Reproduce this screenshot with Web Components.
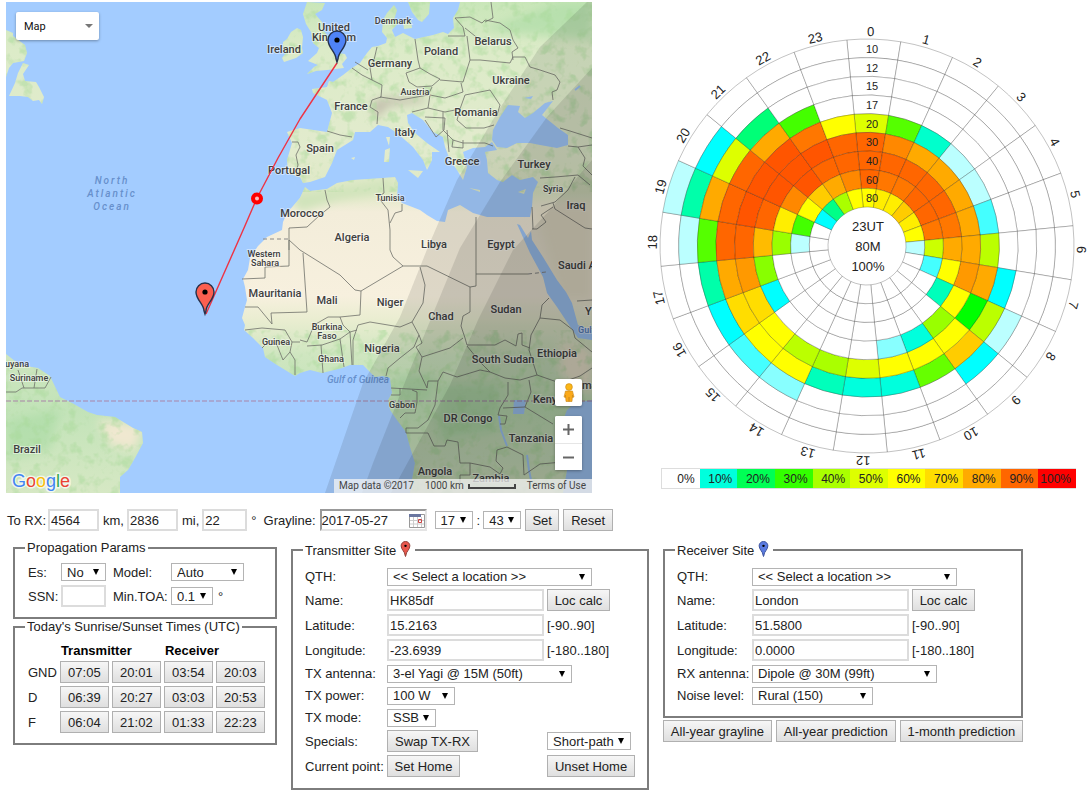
<!DOCTYPE html>
<html lang="en">
<head>
<meta charset="utf-8">
<title>HF Propagation Prediction</title>
<style>
  html { background: #fff; }
  body {
    margin: 0;
    padding: 2px 0 0 6px;
    font: 13px/15px "Liberation Sans", Arial, sans-serif;
    color: #222;
  }
</style>
</head>
<body>
<propagation-app></propagation-app>

<script>
/* Form styles shared by every panel's shadow root. */
const FORM_CSS = `
  * { box-sizing: border-box; }
  input, select, button { font: inherit; color: #222; margin: 0; border-radius: 0; }
  input { height: 22px; width: 100%; padding: 0 1px; border: 2px solid #dcdcdc; background: #fff; outline: 0; }
  select {
    appearance: none; height: 18px; padding: 0 13px 0 5px; border: 1px solid #b4b4b4;
    background: #fff url("data:image/svg+xml,%3Csvg xmlns='http://www.w3.org/2000/svg' width='6' height='6'%3E%3Cpath d='M0 0H6L3 6Z' fill='%23000'/%3E%3C/svg%3E") no-repeat right 6px center;
  }
  button {
    height: 22px; padding: 0; border: 1px solid #b0b0b0; white-space: nowrap;
    background: linear-gradient(#f6f6f6, #dfdfdf);
  }
  label, span { white-space: nowrap; }
`;

const PIN = 'M0 31L-1 28C-1 21-9 17-9 9A9 9 0 0 1 9 9C9 17 1 21 1 28Z';

function define(name, render) {
  customElements.define(name, class extends HTMLElement {
    connectedCallback() {
      if (this.shadowRoot) return;
      this.attachShadow({ mode: 'open' }).innerHTML = render(this);
    }
  });
}

/* ---------- framed box with a caption on its border ---------- */
define('panel-box', () => `
  <style>
    :host { display: block; }
    fieldset { box-sizing: border-box; min-width: 0; margin: 0; border: 2px solid #7d7d7d; padding: var(--pad, 8px 10px 10px); }
    legend { padding: 0 2px; white-space: nowrap; }
  </style>
  <fieldset>
    <legend><slot name="legend"></slot></legend>
    <slot></slot>
  </fieldset>`);

/* ---------- map ---------- */
const LAND = [
  // Europe, Asia and Africa in one coastline
  'M312 89L327 87 329 81 333 82 343 75 352 68 360 63 367 53 372 47 378 46 386 43 387 38 382 32 383 20 387 13 394 5 397 10 394 20 400 21 392 30 395 37 403 33 415 39 433 35 443 32 448 34 454 28 453 18 458 10 460 2 592 2 592 493 410 493 412 480 415 463 410 447 406 432 397 420 390 410 388 400 392 393 390 378 383 376 375 377 368 370 363 365 350 365 342 368 322 373 310 370 300 373 295 376 277 365 265 357 263 348 253 338 244 330 245 325 242 318 245 307 247 300 245 287 243 279 248 270 250 258 258 246 267 237 282 230 283 222 287 213 300 198 305 187 310 191 327 189 337 183 353 180 383 178 395 177 398 183 397 197 402 203 420 210 427 215 437 221 445 222 448 210 460 205 473 213 487 217 510 217 530 217 532 207 533 193 538 182 533 177 520 180 512 175 503 182 497 180 488 173 487 160 485 152 497 150 492 142 485 147 473 148 463 152 467 167 463 180 457 170 450 160 445 147 443 137 433 132 423 120 412 113 407 115 408 123 415 133 427 143 440 152 432 152 432 160 427 170 423 160 413 147 397 133 388 127 378 125 370 132 355 132 353 140 337 150 332 163 325 177 310 182 303 183 300 177 288 173 287 160 292 143 287 132 300 128 327 132 332 113 327 100 313 93Z',
  // Great Britain
  'M307 2L325 3 322 10 315 14 322 22 323 30 330 39 334 48 336 53 345 54 347 58 342 64 344 68 327 70 316 71 307 74 314 67 318 65 308 61 317 53 319 48 313 43 311 32 306 24 303 14Z',
  // Ireland
  'M291 32L297 28 301 30 303 37 302 48 303 53 296 58 284 62 282 58 286 53 283 49 283 42 287 39Z',
  // Sweden, Danish isles
  'M408 2L430 2 429 14 422 22 418 20 412 12Z', 'M403 22L411 20 412 28 404 29Z',
  // Mediterranean islands
  'M408 170L423 171 418 178Z', 'M385 150L390 148 389 162 384 162Z', 'M386 137L390 137 389 146Z', 'M518 192L526 189 524 194Z', 'M469 188L480 190 480 192Z', 'M351 158L355 157 354 160Z',
  // Labrador and Newfoundland
  'M6 30L13 33 13 36 25 45 27 53 24 61 13 63 9 68 6 77Z',
  'M23 63L29 65 23 74 25 81 36 82 39 87 44 97 42 104 39 100 33 101 28 97 20 96 9 96 15 83 18 73Z',
  // South America
  'M6 354L20 365 38 368 50 376 60 397 72 403 88 412 97 415 115 417 133 428 142 432 143 443 135 458 128 470 120 477 120 493 6 493Z'
].join('');

const BORDERS = [
  'M325 190L327 200 330 207 320 215 307 227 289 228 289 250', 'M242 279L265 278 265 267 289 266 289 240 300 250 340 275 355 290 361 291 403 266 393 257 390 250 390 230 388 210 378 197 384 193 383 178', 'M390 223L395 213 402 211 402 204',
  'M303 253L307 312 271 313 272 324 258 307 245 307', 'M403 266L420 266 427 266 470 287 476 286 476 217', 'M476 274L528 274', 'M470 287L470 312 463 316 461 326 465 338 467 345 495 345 505 340 516 346 518 334 522 333 522 345 530 348',
  'M420 267L425 285 423 303 412 322 400 327 370 322 358 325 353 340 353 365', 'M361 291L360 315 340 317 328 317 314 325 310 335 307 342 300 340', 'M340 317L343 325 350 332 357 330', 'M307 346L322 345 340 339 350 332 352 365', 'M321 345L323 373M340 339L344 367',
  'M412 322L419 335 414 347 400 358 388 368 386 376', 'M419 335L422 343 416 347 422 357 450 348 463 338', 'M422 357L419 371 427 388 428 381 438 381 443 372 457 377 480 370 490 372 505 378 520 380 537 375 529 350 531 335 540 318 542 305 549 298',
  'M467 346L480 362 490 372', 'M391 388L427 390M391 395L400 395 400 388M412 390L417 392 417 402 415 413 405 413 400 418', 'M438 381L435 405 428 420 418 428 406 428 406 433 428 433 434 446 445 446 447 440 458 442 460 463 470 463 470 475 460 475 460 485', 'M470 463L490 467 500 474 503 468 496 461 497 450 507 447 523 455 524 475 540 464 563 462',
  'M540 318L560 320 573 330 575 338 592 352', 'M537 375L560 383 580 376 592 368', 'M508 382L508 395 500 408 498 415 507 416 505 424 500 424', 'M529 380L531 392 525 407 553 424', 'M503 408L525 407',
  'M245 330L262 328 285 330 292 342 290 352 295 360 295 375M262 348L270 340 277 345 283 360M283 360L290 352M292 342L300 342',
  'M292 142L298 142 300 147 296 155 298 165 296 172M327 131L340 135 352 137', 'M352 68L362 75 372 80 382 85 381 97 372 100 370 107 378 112 377 124M377 47L374 60 370 68 372 80M355 62L368 70',
  'M415 39L418 60 420 68 406 73 409 82 417 87 432 86 440 79 430 74 420 68M380 97L400 100 428 95 432 87M467 36L470 60 463 82 440 80M430 95L445 98 463 92 461 83M412 112L428 108 430 95M428 108L445 112 460 109 465 95 490 90 500 105 497 115',
  'M460 109L457 120 466 128 484 128 494 125M470 60L480 60 510 63 513 57 525 57 530 67 540 70 555 75 560 82 557 90 552 92 553 100M448 36L465 36 463 27 455 18 470 17 482 23 485 20 500 23 510 30 513 40 518 48 512 52 513 60M491 2L493 18 485 22M465 28L480 40',
  'M425 117L445 118 444 130 436 137 425 120M443 112L443 130 453 140 463 143 485 143 493 146M447 130L449 152M453 140L452 147 463 148 463 140',
  'M540 178L555 177 578 175 590 185M575 177L568 190 555 202 541 206M553 203L555 209 585 228 592 229M532 229L537 229 546 222 541 215 553 207M532 207L533 229M560 128L570 131 592 138M568 146L578 147 585 158 583 166 592 175M578 147L592 145M577 301L592 300',
  'M6 392L16 392 22 388 45 388 51 377M18 370L24 388M37 369L34 388'
].join('');

const PLACES = [ // text, centre x, centre y, size class
  ['United',334,27],['Kingdom',334,37],['Ireland',284,49],['Denmark',393,21,'s'],['Belarus',493,41],['Poland',441,51],['Germany',390,63],['Ukraine',511,80],['France',351,106],['Austria',415,92,'s'],['Romania',476,112],['Italy',405,132],['Spain',320,148],['Portugal',289,170],['Greece',462,161],['Turkey',534,164],['Syria',553,189,'s'],['Iraq',576,205],['Tunisia',390,198,'s'],['Morocco',302,213],['Algeria',352,237],['Libya',434,244],['Egypt',501,244],['Western',264,254,'s'],['Sahara',265,263,'s'],['Mauritania',275,293],['Mali',327,300],['Niger',390,302],['Chad',441,316],['Sudan',506,309],['Guinea',276,342,'s'],['Burkina',327,327,'s'],['Faso',327,336,'s'],['Ghana',331,359,'s'],['Nigeria',382,348],['South Sudan',503,359],['Ethiopia',557,353],['Gabon',402,405,'s'],['DR Congo',468,418],['Tanzania',531,438],['Angola',435,471],['Zambia',491,478],['Suriname',29,378,'s'],['Brazil',27,449]
];

define('path-map', () => `
  <style>
    :host { display: block; position: relative; font-family: Roboto, sans-serif; }
    svg { display: block; width: 100%; height: auto; }
    text { font-size: 11px; font-weight: 500; fill: #404040; text-anchor: middle; paint-order: stroke; stroke: #fff; stroke-opacity: .45; stroke-width: 2px; }
    .s { font-size: 9px; }
    .sea { fill: #6790cc; stroke: none; font-style: italic; font-size: 10px; }
    .wide { letter-spacing: 2px; }
    .start { text-anchor: start; }
    .logo { font: 18px "Liberation Sans", sans-serif; stroke-width: 3px; stroke-opacity: .7; text-anchor: start; }
    button { font: 11px Roboto, sans-serif; color: #111; background: #fff; border: 0; border-radius: 2px; box-shadow: 0 1px 3px #0005; padding: 0; }
    button svg { margin: auto; width: auto; }
    .type { position: absolute; left: 10px; top: 10px; width: 83px; height: 28px; display: flex; align-items: center; justify-content: space-between; padding: 0 6px 0 8px; }
    .type svg { margin: 0; }
    .tools { position: absolute; right: 10px; bottom: 23px; width: 27px; display: grid; gap: 10px; }
    .tools button { height: 27px; width: 27px; }
    .zoom { display: grid; background: #fff; box-shadow: 0 1px 3px #0005; border-radius: 2px; }
    .zoom button { box-shadow: none; }
    .zoom button + button { border-top: 1px solid #e6e6e6; border-radius: 0; }
    .credits { position: absolute; right: 0; bottom: 0; height: 14px; display: flex; align-items: center; gap: 11px; padding: 0 6px 0 5px; background: #f5f5f5bb; color: #444; font-size: 10px; line-height: 14px; white-space: nowrap; }
    .credits a { color: inherit; text-decoration: none; }
    .scale { display: flex; align-items: center; gap: 4px; }
    .scale i { width: 48px; height: 5px; box-sizing: border-box; border: solid #444; border-width: 0 2px 2px; }
  </style>
  <svg viewBox="6 2 586 491" role="img" aria-label="Great circle path from transmitter to receiver">
    <defs>
      <linearGradient id="ground" gradientUnits="userSpaceOnUse" x1="0" y1="0" x2="0" y2="493">
        <stop offset="0" stop-color="#c8e6b8"/><stop offset=".1" stop-color="#dcebc8"/><stop offset=".3" stop-color="#e2ebcd"/>
        <stop offset=".39" stop-color="#dfe9c6"/><stop offset=".43" stop-color="#f3edda"/><stop offset=".6" stop-color="#f7f0de"/>
        <stop offset=".65" stop-color="#e9edd0"/><stop offset=".72" stop-color="#cfe6c0"/><stop offset=".83" stop-color="#c2e3b8"/><stop offset="1" stop-color="#d6e8c4"/>
      </linearGradient>
      <filter id="soft" x="-30%" y="-30%" width="160%" height="160%"><feGaussianBlur stdDeviation="5"/></filter>
      <filter id="grain" x="0" y="0" width="100%" height="100%" color-interpolation-filters="sRGB"><feTurbulence type="fractalNoise" baseFrequency=".09" numOctaves="3" seed="4"/><feColorMatrix values="0 0 0 0 .66  0 0 0 0 .85  0 0 0 0 .6  4 0 0 0 -2"/></filter>
      <clipPath id="coast"><path d="${LAND}"/></clipPath>
      <clipPath id="frame"><path d="M6 2H592V493H6Z"/></clipPath>
    </defs>
    <g clip-path="url(#frame)">
      <path fill="#a3ccff" d="M6 2H592V493H6Z"/>
      <path fill="url(#ground)" d="${LAND}"/>
      <g clip-path="url(#coast)">
        <g filter="url(#soft)">
          <path fill="#f0e8d0" d="M533 205H592V300H560ZM98 420L143 425 135 450 110 445ZM560 340L592 350V395L560 375Z"/>
          <path fill="#a8daa4" opacity=".6" d="M440 385L500 385 495 430 440 440ZM6 420L60 410 50 450 6 460ZM560 2H592V40L480 30ZM396 375L435 375 430 400 395 405Z"/>
          <path fill="#b6ada0" opacity=".7" d="M371 102L385 98 425 97 425 102 388 106 376 120Z"/>
          <path fill="#cfe3ba" d="M290 195L330 190 390 180 395 190 335 200 300 212Z"/>
        </g>
        <rect filter="url(#grain)" opacity=".5" x="6" y="2" width="586" height="190"/>
        <rect filter="url(#grain)" opacity=".5" x="6" y="330" width="586" height="163"/>
      </g>
      <g fill="#a3ccff">
        <path d="M493 130L500 117 508 105 520 106 518 112 525 118 533 113 545 103 553 101 542 115 558 128 568 135 568 145 557 148 540 145 530 143 517 143 507 148 497 147 492 140Z"/>
        <path d="M517 224L520 225 528 238 531 231 532 240 543 257 557 280 566 292 572 303 578 325 592 330V340L578 338 567 322 557 307 547 293 543 277 530 253Z"/>
        <path d="M592 400L575 403 567 410 562 423 563 450 567 470 563 493H592Z"/>
        <path d="M514 400H526L524 414H513ZM524 98L533 96 531 99Z"/>
        <path fill="none" stroke="#a3ccff" stroke-width="2" d="M499 416L501 430 507 446M527 455L529 470 531 480M575 90L580 86"/>
      </g>
      <path d="${BORDERS}" fill="none" stroke="#6f706a" stroke-opacity=".8" stroke-linejoin="round"/>
      <path d="M263 239H288M528 274L546 272" fill="none" stroke="#888" stroke-dasharray="4 3"/>
      <path d="M6 401H592" stroke="#a984a8" stroke-dasharray="5 2"/>
      <g>
        ${PLACES.map(([t, x, y, c]) => `<text class="${c || ''}" x="${x}" y="${y + (c ? 3 : 4)}">${t}</text>`).join('')}
        <text class="start" x="558" y="269">Saudi A</text><text class="start" x="585" y="315">Y</text>
        <text class="start" x="533" y="403">Keny</text><text class="start" x="582" y="389">ma</text>
        <text class="start s" x="5" y="367">uyana</text><text class="start s" x="578" y="333" style="fill:#5580c0">Gulf</text>
        <text class="sea" x="358" y="383">Gulf of Guinea</text>
        <text class="sea wide" x="112" y="184">North</text><text class="sea wide" x="112" y="197">Atlantic</text><text class="sea wide" x="112" y="210">Ocean</text>
      </g>
      <g fill="#141414" fill-opacity=".11">
        <path d="M587 2L540 47 500 108 457 180 428 247 400 317 363 383 325 493H592V2Z"/>
        <path d="M592 68L547 117 500 182 460 248 407 377 373 463 362 493H592Z"/>
        <path d="M592 160L548 212 513 250 478 320 450 385 420 440 391 493H592Z"/>
      </g>
      <path d="M337 63L300 119 278 158 257 198 244 228 206 314" fill="none" stroke="#ee3344" stroke-width="1.4" stroke-linejoin="round"/>
      <circle cx="257" cy="198.5" r="4" fill="#fbb" stroke="#f00" stroke-width="4"/>
      <g stroke="#25304a" stroke-width="1.4">
        <path transform="translate(337 31)" fill="#4f83f7" d="${PIN}"/>
        <path transform="translate(205 283)" fill="#fb5f50" d="${PIN}"/>
      </g>
      <circle cx="337" cy="40" r="2.600"/><circle cx="205" cy="292" r="2.600"/>
      <text class="logo" x="12" y="487"><tspan fill="#4285f4">G</tspan><tspan fill="#ea4335">o</tspan><tspan fill="#fbbc05">o</tspan><tspan fill="#4285f4">g</tspan><tspan fill="#34a853">l</tspan><tspan fill="#ea4335">e</tspan></text>
    </g>
  </svg>
  <button class="type" type="button" aria-haspopup="true">Map<svg width="8" height="4" viewBox="0 0 8 4"><path d="M0 0H8L4 4Z" fill="#777"/></svg></button>
  <div class="tools">
    <button type="button" aria-label="Street View"><svg width="12" height="20" viewBox="0 0 12 20"><circle cx="6" cy="4" r="3.400" fill="#fbb617" stroke="#c8861a" stroke-width=".6"/><path d="M2.500 8H9.500L11 14 9.500 14.500V12L9 18.500H3L2.500 12V14.500L1 14Z" fill="#fba919" stroke="#c8861a" stroke-width=".6"/><path d="M6 14V18.500" stroke="#c8861a"/></svg></button>
    <div class="zoom">
      <button type="button" aria-label="Zoom in"><svg width="11" height="11" viewBox="0 0 11 11"><path d="M5.500 0V11M0 5.500H11" stroke="#666" stroke-width="2"/></svg></button>
      <button type="button" aria-label="Zoom out"><svg width="11" height="11" viewBox="0 0 11 11"><path d="M0 5.500H11" stroke="#666" stroke-width="2"/></svg></button>
    </div>
  </div>
  <div class="credits"><span>Map data ©2017</span><span class="scale">1000 km<i></i></span><a href="#terms">Terms of Use</a></div>`);

/* ---------- 24-hour band wheel ---------- */
/* One row per hour; nine bands from 10 m (outer) to 80 m (inner), "-" for no opening. */
const HOURS = [
  '- - - - df0 f60 f60 f60 ff0', '- - - - 5f0 f80 f60 f70 fe0', '- - - - 0fc fa0 f60 f70 fe0', '- - - - bff fa0 f60 f60 fc0',
  '- - - - bff fa0 f60 f60 fe0', '- - - - 4ff fa0 f70 f70 ff0', '- - - - bf0 fa0 fa0 cf0 bff', '- - - 0ff fa0 f90 ff0 4ff -',
  '- - bff bf0 0f0 ff0 0fb - -', '- - 0ff fc0 ff0 9f0 - - -', '- - - 6f0 ff0 0fd - - -', '- - - 0fd ff0 8ff - - -',
  '- - - 0fd df0 - - - -', '- - - 0fb af0 - - - -', '- - 8ff ff0 bf0 - - - -', '- - 4ff ff0 ff0 - - - -',
  '- - 0ff fd0 fd0 0ff - - -', '- - 0fa fa0 f90 8f0 - - -', '- bff 5f0 f60 f60 fb0 9f0 bff -', 'bff 0fa fa0 f60 f50 f60 fe0 4f0 -',
  '- 0ff df0 f60 f50 f50 f80 ff0 0ff', '- - 0f7 fa0 f50 f50 f50 fc0 0f8', '- - - 4f0 f70 f50 f60 fa0 af0', '- - - - ff0 f60 f60 f80 ff0'
];
const BANDS = [10, 12, 15, 17, 20, 30, 40, 60, 80];
const SCALE = ['fff', '0fd', '0f5', '3f0', 'af0', 'df0', 'ff0', 'fd0', 'fa0', 'f60', 'f00'];

function wheel() {
  const CX = 867, CY = 246, OUT = 207, IN = 39, STEP = (OUT - IN) / 9;
  const at = (r, deg) => {
    const a = deg * Math.PI / 180;
    return (CX + r * Math.sin(a)).toFixed(1) + ' ' + (CY - r * Math.cos(a)).toFixed(1);
  };
  let cells = '', text = '';
  HOURS.forEach((row, h) => {
    const a = h * 15 - 5.6, b = a + 15;
    row.split(' ').forEach((c, i) => {
      const R = OUT - i * STEP, r = R - STEP;
      cells += `<path fill="${c === '-' ? '#fff' : '#' + c}" d="M${at(R, a)}A${R} ${R} 0 0 1 ${at(R, b)}L${at(r, b)}A${r} ${r} 0 0 0 ${at(r, a)}Z"/>`;
    });
    text += `<text transform="translate(${at(OUT + 3, h * 15 + 1)}) rotate(${h * 15 + 1})">${h}</text>`;
  });
  BANDS.forEach((m, i) => {
    text += `<text class="band" x="872" y="${Math.round(53 + i * STEP)}">${m}</text>`;
  });
  return `<g stroke="#000" stroke-opacity=".3" stroke-width=".8">${cells}</g>${text}
    <text x="868" y="231">23UT</text><text x="868" y="251">80M</text><text x="868" y="271">100%</text>`;
}

define('band-wheel', () => `
  <style>
    :host { display: block; }
    svg { display: block; width: 100%; height: auto; }
    text { font-size: 13px; text-anchor: middle; fill: #222; }
    .band { font-size: 11px; }
    ol { display: flex; list-style: none; margin: 3px 11px 0 21px; padding: 0; height: 21px; box-sizing: border-box; border: 1px solid #ddd; border-width: 1px 0 1px 1px; font-size: 12px; line-height: 20px; }
    li { flex: 1 1 0; text-align: right; padding-right: 5px; }
  </style>
  <svg viewBox="640 20 447 445" role="img" aria-label="Circuit reliability by hour and band">${wheel()}</svg>
  <ol>${SCALE.map((c, i) => `<li style="background:#${c}">${i * 10}%</li>`).join('')}</ol>`);

/* ---------- path summary and grayline time ---------- */
define('path-bar', () => `
  <style>${FORM_CSS}
    :host { display: block; }
    form { display: flex; align-items: center; gap: 2px; margin: 0; }
    .n { width: 51px; } .deg { width: 45px; }
    .unit { margin: 0 1px 0 2px; }
    .gray { margin-left: 4px; }
    .date { position: relative; width: 107px; margin: 0 6px 0 2px; }
    .date input { border-style: solid; border-color: #999 #e4e4e4 #e4e4e4 #999; padding: 0; display: block; }
    .date svg { position: absolute; right: 2px; top: 5px; }
    .hm { width: 38px; }
    .colon { margin: 0 1px 0 2px; }
    .set { width: 34px; margin: 0 2px; } .reset { width: 50px; }
  </style>
  <form>
    <label for="km">To RX:</label><input class="n" id="km" value="4564"><label class="unit" for="km">km,</label>
    <input class="n" id="mi" value="2836" aria-label="Miles"><label class="unit" for="mi">mi,</label>
    <input class="deg" id="deg" value="22" aria-label="Bearing"><label class="unit" for="deg">°</label>
    <label class="gray" for="date">Grayline:</label>
    <div class="date"><input id="date" value="2017-05-27">
      <svg width="16" height="14" viewBox="0 0 16 14"><path fill="#fff" stroke="#999" d="M.5.500H15.500V13.500H.5Z"/><path fill="#6a76a0" d="M0 0H12V3H0Z"/><path stroke="#ccc" d="M4.500 3V13M8.500 3V13M12.500 3V13M1 6.500H15M1 10H15"/><path fill="none" stroke="#c44" d="M9.500 5.500H12.500V8.500H9.500Z"/></svg></div>
    <select class="hm" aria-label="Hour"><option>17</option></select><span class="colon">:</span>
    <select class="hm" aria-label="Minute"><option>43</option></select>
    <button class="set" type="button">Set</button><button class="reset" type="button">Reset</button>
  </form>`);

/* ---------- propagation parameters ---------- */
define('propagation-params', () => `
  <style>${FORM_CSS}
    :host { display: block; }
    form { display: grid; grid-template-columns: 29px 48px 54px auto; gap: 4px; align-items: center; justify-content: start; margin: 0; padding-left: 3px; }
    #es { width: 45px; } #model { width: 73px; } #toa { width: 42px; } #ssn { width: 45px; }
    .toa { display: flex; gap: 5px; align-items: center; }
    panel-box { --pad: 8px 10px 10px; }
  </style>
  <panel-box><span slot="legend">Propagation Params</span>
    <form>
      <label for="es">Es:</label><select id="es"><option>No</option></select>
      <label for="model">Model:</label><select id="model"><option>Auto</option></select>
      <label for="ssn">SSN:</label><input id="ssn">
      <label for="toa">Min.TOA:</label><div class="toa"><select id="toa"><option>0.1</option></select><span>°</span></div>
    </form>
  </panel-box>`);

/* ---------- sunrise and sunset ---------- */
const SUN = [['GND', '07:05', '20:01', '03:54', '20:03'], ['D', '06:39', '20:27', '03:03', '20:53'], ['F', '06:04', '21:02', '01:33', '22:23']];
define('sun-times', () => `
  <style>${FORM_CSS}
    :host { display: block; }
    panel-box { --pad: 5px 8px 7px 10px; }
    table { border-spacing: 3px; }
    th, td { padding: 0; text-align: left; }
    tbody th { font-weight: normal; width: 29px; }
    thead th { height: 16px; padding-left: 1px; color: #000; }
    td button { display: block; width: 49px; }
  </style>
  <panel-box><span slot="legend">Today's Sunrise/Sunset Times (UTC)</span>
    <table>
      <thead><tr><td></td><th colspan="2" scope="colgroup">Transmitter</th><th colspan="2" scope="colgroup">Receiver</th></tr></thead>
      <tbody>${SUN.map(([k, ...t]) => `<tr><th scope="row">${k}</th>${t.map(v => `<td><button type="button">${v}</button></td>`).join('')}</tr>`).join('')}</tbody>
    </table>
  </panel-box>`);

/* ---------- transmitter / receiver site ---------- */
const SITES = {
  tx: {
    title: 'Transmitter Site', pin: '#e8574c', edge: '#8d3b34', label: 79, name: 'HK85df', lat: '15.2163', lon: '-23.6939',
    more: `<label for="ant">TX antenna:</label><select class="w185" id="ant"><option>3-el Yagi @ 15M (50ft)</option></select>
      <label for="pow">TX power:</label><select class="w68" id="pow"><option>100 W</option></select>
      <label for="mode">TX mode:</label><select class="w49" id="mode"><option>SSB</option></select>
      <label for="swap">Specials:</label><button class="w91" id="swap" type="button">Swap TX-RX</button><select class="w84" aria-label="Path"><option>Short-path</option></select>
      <label for="home">Current point:</label><button class="w73" id="home" type="button">Set Home</button><button class="w88" type="button">Unset Home</button>`,
    rows: '19px 22px 22px 22px 19px 19px 19px 22px 22px'
  },
  rx: {
    title: 'Receiver Site', pin: '#5b7be0', edge: '#38509c', label: 72, name: 'London', lat: '51.5800', lon: '0.0000',
    more: `<label for="ant">RX antenna:</label><select class="w185" id="ant"><option>Dipole @ 30M (99ft)</option></select>
      <label for="noise">Noise level:</label><select class="w121" id="noise"><option>Rural (150)</option></select>`,
    rows: '19px 22px 22px 22px 19px 19px'
  }
};
define('site-panel', el => {
  const s = SITES[el.getAttribute('kind')];
  return `
  <style>${FORM_CSS}
    :host { display: block; }
    panel-box { --pad: 7px 8px 11px 10px; }
    .head { display: flex; align-items: center; gap: 4px; height: 20px; padding-right: 2px; }
    .head svg { margin-bottom: 3px; }
    form { display: grid; grid-template-columns: ${s.label}px 157px auto; grid-template-rows: ${s.rows}; gap: 3px; align-items: center; justify-content: start; margin: 0; padding-left: 2px; }
    form > label:not(.unit) { grid-column: 1; }
    .w205 { width: 205px; } .w185 { width: 185px; } .w121 { width: 121px; } .w91 { width: 91px; } .w88 { width: 88px; }
    .w84 { width: 84px; } .w73 { width: 73px; } .w68 { width: 68px; } .w63 { width: 63px; } .w49 { width: 49px; }
    .w205, .w185 { grid-column: 2 / 4; }
  </style>
  <panel-box><span slot="legend" class="head">${s.title}
      <svg width="11" height="16" viewBox="-10 -1 20 33"><path d="${PIN}" fill="${s.pin}" stroke="${s.edge}" stroke-width="2"/><circle cy="9" r="2.500"/></svg></span>
    <form>
      <label for="qth">QTH:</label><select class="w205" id="qth"><option>&lt;&lt; Select a location &gt;&gt;</option></select>
      <label for="name">Name:</label><input id="name" value="${s.name}"><button class="w63" type="button">Loc calc</button>
      <label for="lat">Latitude:</label><input id="lat" value="${s.lat}"><label class="unit" for="lat">[-90..90]</label>
      <label for="lon">Longitude:</label><input id="lon" value="${s.lon}"><label class="unit" for="lon">[-180..180]</label>
      ${s.more}
    </form>
  </panel-box>`;
});

define('report-buttons', () => `
  <style>${FORM_CSS}
    :host { display: flex; gap: 4px; margin-top: 2px; }
    button { flex: 1 1 auto; }
  </style>
  <button type="button">All-year grayline</button><button type="button">All-year prediction</button><button type="button">1-month prediction</button>`);

/* ---------- page ---------- */
define('propagation-app', () => `
  <style>
    :host { display: block; }
    .top { display: grid; grid-template-columns: minmax(0, 586fr) minmax(0, 447fr); gap: 48px; }
    band-wheel { margin-top: 18px; }
    path-bar { margin: 16px 0 9px 1px; }
    .panels { display: grid; grid-template-columns: minmax(0, 264fr) minmax(0, 358fr) minmax(0, 360fr); gap: 14px; margin: 0 64px 0 7px; align-items: start; }
  </style>
  <main>
    <div class="top"><path-map></path-map><band-wheel></band-wheel></div>
    <path-bar></path-bar>
    <div class="panels">
      <div><propagation-params></propagation-params><sun-times></sun-times></div>
      <site-panel kind="tx"></site-panel>
      <div><site-panel kind="rx"></site-panel><report-buttons></report-buttons></div>
    </div>
  </main>`);
</script>
</body>
</html>
